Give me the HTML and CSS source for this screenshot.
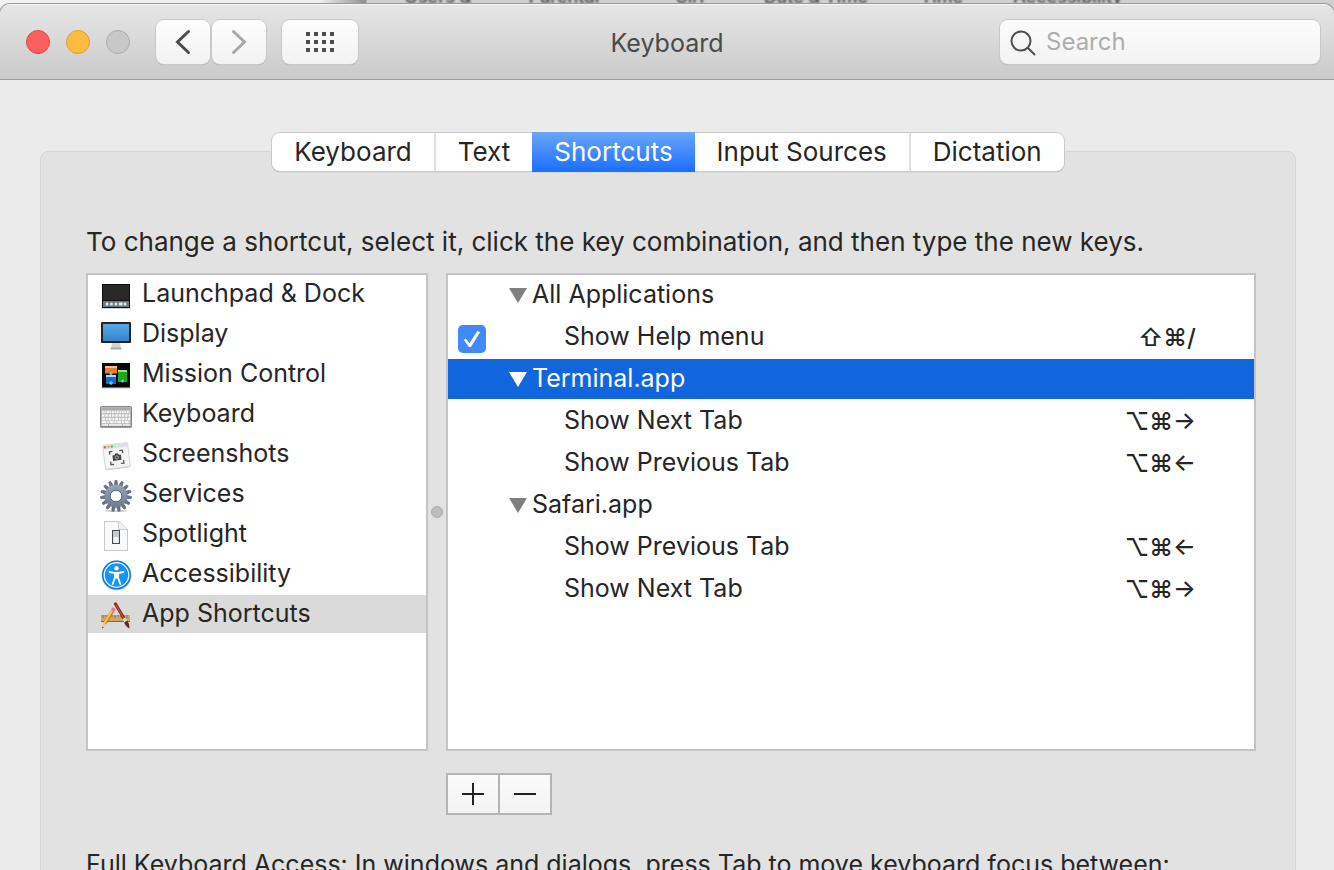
FILE: index.html
```html
<!DOCTYPE html>
<html lang="en">
<head>
<meta charset="utf-8">
<title>Keyboard</title>
<link rel="stylesheet" href="styles.css">
</head>
<body>
<div class="backdrop" aria-hidden="true">
  <div class="backdrop-labels">
    <span>Users &amp;</span><span>Parental</span><span>Siri</span><span>Date &amp; Time</span><span>Time</span><span>Accessibility</span>
  </div>
</div>
<div class="window">
  <header class="toolbar">
    <div class="toolbar-left">
      <div class="lights">
        <button class="light light-close" aria-label="Close"></button>
        <button class="light light-min" aria-label="Minimize"></button>
        <button class="light light-off" aria-label="Zoom" disabled></button>
      </div>
      <div class="nav">
        <button class="tool" aria-label="Back"><svg width="54" height="44" viewBox="0 0 54 44"><path d="M32.500 11.500 21.500 22l11 10.500" fill="none" stroke="#4d4d4d" stroke-width="3" stroke-linecap="round"/></svg></button>
        <button class="tool" aria-label="Forward"><svg width="54" height="44" viewBox="0 0 54 44"><path d="M21.500 11.500l11 10.500-11 10.500" fill="none" stroke="#a8a8a8" stroke-width="3" stroke-linecap="round"/></svg></button>
      </div>
      <button class="tool tool-wide" aria-label="Show all"><svg width="28" height="20" viewBox="0 0 28 20" fill="#4d4d4d"><path d="M0 0h4v4H0zM8 0h4v4H8zM16 0h4v4h-4zM24 0h4v4h-4zM0 8h4v4H0zM8 8h4v4H8zM16 8h4v4h-4zM24 8h4v4h-4zM0 16h4v4H0zM8 16h4v4H8zM16 16h4v4h-4zM24 16h4v4h-4z"/></svg></button>
    </div>
    <h1 class="title">Keyboard</h1>
    <label class="search">
      <svg width="26" height="28" viewBox="0 0 26 28" fill="none" stroke="#4d4d4d" stroke-width="2"><circle cx="11" cy="13" r="9.500"/><path d="M17.500 19.500l7.500 7.500"/></svg>
      <input type="text" placeholder="Search" aria-label="Search">
    </label>
  </header>
  <main class="content">
    <div class="tabs" role="tablist">
      <button class="tab" role="tab">Keyboard</button>
      <button class="tab" role="tab">Text</button>
      <button class="tab tab-active" role="tab" aria-selected="true">Shortcuts</button>
      <button class="tab" role="tab">Input Sources</button>
      <button class="tab" role="tab">Dictation</button>
    </div>
    <section class="panel">
      <p class="hint">To change a shortcut, select it, click the key combination, and then type the new keys.</p>
      <div class="split">
        <ul class="categories">
          <li><svg class="icon" viewBox="0 0 32 32"><rect x="1" y="27" width="30" height="2" rx="1" fill="#ccd4d8"/><rect x="2" y="4" width="28" height="24" fill="#101010"/><rect x="3" y="5" width="26" height="15" fill="#292929"/><rect x="3" y="21" width="26" height="6" fill="#73787b"/><g fill="#d5effb"><circle cx="7" cy="24" r="1.500"/><circle cx="11.500" cy="24" r="1.500"/><circle cx="16" cy="24" r="1.500"/><rect x="19" y="22.500" width="3.500" height="3"/><circle cx="25" cy="24" r="1.500"/></g></svg>Launchpad &amp; Dock</li>
          <li><svg class="icon" viewBox="0 0 32 32"><defs><linearGradient id="scr" x2="0" y2="1"><stop stop-color="#58a9e8"/><stop offset="1" stop-color="#3385c9"/></linearGradient></defs><path d="M12 23h8l1 5H11z" fill="#d2d2d2"/><path d="M11 27.500h10l1 2H10z" fill="#aaa"/><rect x="1" y="2" width="30" height="21" rx="1" fill="#222"/><rect x="3" y="4" width="26" height="17" fill="url(#scr)"/></svg>Display</li>
          <li><svg class="icon" viewBox="0 0 32 32"><rect x="1.500" y="27" width="29" height="2" fill="#ddd"/><rect x="2" y="3" width="28" height="24.500" fill="#080808"/><rect x="5" y="6" width="12" height="7.500" fill="#ee7c22"/><path d="M5 6h12v2H5z" fill="#f8bd8a"/><rect x="6" y="16" width="10" height="8" fill="#1a67d4"/><path d="M6 15h10v2H6z" fill="#b6d5f5"/><rect x="18" y="11" width="9" height="11" fill="#1ea51c"/><path d="M18 10h9v2h-9z" fill="#91e47f"/><g fill="#5ac8f5"><circle cx="11" cy="13.500" r="1.500"/><circle cx="11" cy="23" r="1.800"/><circle cx="22.500" cy="21" r="1.500"/></g></svg>Mission Control</li>
          <li><svg class="icon" viewBox="0 0 32 32"><rect y="26" width="32" height="2" rx="1" fill="#999"/><rect x=".5" y="6.500" width="31" height="20" rx="1" fill="#b6b6b6" stroke="#858585"/><path d="M2 9h28" stroke="#a1a1a1"/><g stroke="#f6f6f6" stroke-width="2.300"><path d="M2 12h28" stroke-dasharray="1.800 .7"/><path d="M2 15.500h28" stroke-dasharray="2.500 .8"/><path d="M2 19h28" stroke-dasharray="3 .8 2 .7"/><path d="M2 22h28" stroke-dasharray="4 .8 2 .8"/><path d="M2 25h6M9 25h13M23 25h7" stroke-width="1.500"/></g></svg>Keyboard</li>
          <li><svg class="icon" viewBox="0 0 32 32"><g transform="rotate(-7 16 16)"><rect x="4" y="5" width="25" height="24" rx="1" fill="#d0d0d0"/><rect x="4" y="4" width="25" height="24" rx="1" fill="#f5f5f5" stroke="#ccc" stroke-width=".7"/><path d="M4 4h25v4H4z" fill="#dedede"/><circle cx="6" cy="6" r="1.200" fill="#fc5753"/><circle cx="9.500" cy="6" r="1.200" fill="#e9b05c"/><circle cx="13" cy="6" r="1.200" fill="#43c85b"/><path d="M10 14v-3h3M20 11h3v3M23 21v3h-3M13 24h-3v-3" fill="none" stroke="#555" stroke-width="1.300"/><path d="M12.500 15h2l1-1.500h2.500l1 1.500h2v5.500h-8.500z" fill="#444"/><circle cx="16.700" cy="17.500" r="1.700" fill="#555" stroke="#bbb" stroke-width=".7"/></g></svg>Screenshots</li>
          <li><svg class="icon" viewBox="0 0 32 32"><defs><linearGradient id="gear" gradientUnits="userSpaceOnUse" x1="0" y1="0" x2="0" y2="32"><stop stop-color="#a1acbe"/><stop offset="1" stop-color="#65728a"/></linearGradient><path id="tooth" d="M14.300 5.500L15 .5h2L17.700 5.500z" fill="#66738a" stroke="#4c586c" stroke-width=".6"/></defs><ellipse cx="16" cy="31" rx="11" ry="1" fill="#ccc"/><use href="#tooth"/><use href="#tooth" transform="rotate(24 16 16)"/><use href="#tooth" transform="rotate(48 16 16)"/><use href="#tooth" transform="rotate(72 16 16)"/><use href="#tooth" transform="rotate(96 16 16)"/><use href="#tooth" transform="rotate(120 16 16)"/><use href="#tooth" transform="rotate(144 16 16)"/><use href="#tooth" transform="rotate(168 16 16)"/><use href="#tooth" transform="rotate(192 16 16)"/><use href="#tooth" transform="rotate(216 16 16)"/><use href="#tooth" transform="rotate(240 16 16)"/><use href="#tooth" transform="rotate(264 16 16)"/><use href="#tooth" transform="rotate(288 16 16)"/><use href="#tooth" transform="rotate(312 16 16)"/><use href="#tooth" transform="rotate(336 16 16)"/><circle cx="16" cy="16" r="8.500" fill="none" stroke="url(#gear)" stroke-width="5.500"/><circle cx="16" cy="16" r="5.800" fill="#fff" stroke="#58647a"/></svg>Services</li>
          <li><svg class="icon" viewBox="0 0 32 32"><path d="M4.500 1.500H19l8.500 8v21h-23z" fill="#fafafa" stroke="#c8c8c8"/><path d="M18.500 1.500v8h9" fill="#f2f2f2" stroke="#c8c8c8"/><rect x="12.500" y="10.500" width="7" height="13" fill="#c7cbd0" stroke="#454c56"/><rect x="13.500" y="17" width="5" height="6" fill="#f4f4f4"/></svg>Spotlight</li>
          <li><svg class="icon" viewBox="0 0 32 32"><circle cx="16.500" cy="15.500" r="15" fill="#bcc8d0"/><circle cx="16.500" cy="15" r="14.500" fill="#0a7ce4"/><circle cx="16.500" cy="15" r="12.300" fill="#1594f3" stroke="#fff" stroke-width="1.200"/><circle cx="16.500" cy="8.200" r="2.200" fill="#fff"/><path d="M9.500 12l5.500 1v4.500L12.700 24M23.500 12l-5.500 1v4.500l2.300 6.500" fill="none" stroke="#fff" stroke-width="1.800" stroke-linecap="round"/><path d="M14 12h5l-.5 6.500h-4z" fill="#fff"/></svg>Accessibility</li>
          <li class="selected"><svg class="icon" viewBox="0 0 32 32"><path d="M1 15h29v6H1z" fill="#cfa672"/><path d="M1 21h29v1H1z" fill="#8c6239"/><path d="M3 15v3m3-3v2m3-2v3m3-3v2m3-2v3m3-3v2m3-2v3m3-3v2m3-2v3" stroke="#7b5a38" stroke-width=".7"/><path d="M15.500 4L24 18.500" stroke="#8f2a1c" stroke-width="3.200" stroke-linecap="round"/><path d="M16 5L23.500 18" stroke="#cc5a3c" stroke-width="1"/><path d="M23.800 18.200l2 3.400" stroke="#dcdcdc" stroke-width="3.200"/><path d="M24.200 22.400l3-1.800q2.500 3 2.300 7.900-4-2-5.300-6.100z" fill="#5a2f22"/><path d="M4.700 23.500L12.800 10.500" stroke="#c87d13" stroke-width="3.400"/><path d="M4.300 23.200L12.400 10.200" stroke="#fbc548" stroke-width="2"/><path d="M12.600 10.800l1.500-2.600" stroke="#eb719c" stroke-width="3.600"/><path d="M3.100 22.600l3.200 1.900L2 28.500z" fill="#eccb99"/><path d="M2.300 26.600l1.300.8L2 28.700z" fill="#333"/></svg>App Shortcuts</li>
        </ul>
        <div class="splitter"></div>
        <div class="shortcuts">
          <table>
            <tbody>
              <tr class="group"><td class="c-check"></td><td><i class="tri"></i>All Applications</td><td class="keys"></td></tr>
              <tr><td class="c-check"><input type="checkbox" id="help" checked></td><td><label for="help">Show Help menu</label></td><td class="keys">⇧⌘/</td></tr>
              <tr class="group selected-row"><td class="c-check"></td><td><i class="tri"></i>Terminal.app</td><td class="keys"></td></tr>
              <tr><td class="c-check"></td><td>Show Next Tab</td><td class="keys">⌥⌘→</td></tr>
              <tr><td class="c-check"></td><td>Show Previous Tab</td><td class="keys">⌥⌘←</td></tr>
              <tr class="group"><td class="c-check"></td><td><i class="tri"></i>Safari.app</td><td class="keys"></td></tr>
              <tr><td class="c-check"></td><td>Show Previous Tab</td><td class="keys">⌥⌘←</td></tr>
              <tr><td class="c-check"></td><td>Show Next Tab</td><td class="keys">⌥⌘→</td></tr>
            </tbody>
          </table>
        </div>
      </div>
      <div class="edit">
        <button aria-label="Add"><svg width="22" height="22" viewBox="0 0 22 22"><path d="M0 11h22M11 0v22" stroke="#222" stroke-width="2"/></svg></button>
        <button aria-label="Remove"><svg width="22" height="22" viewBox="0 0 22 22"><path d="M0 11h22" stroke="#222" stroke-width="2"/></svg></button>
      </div>
      <p class="access">Full Keyboard Access: In windows and dialogs, press Tab to move keyboard focus between:</p>
    </section>
  </main>
</div>
</body>
</html>
```
FILE: styles.css
```css
* { box-sizing: border-box; }
html { height: 100%; overflow: hidden; }
body {
  margin: 0;
  height: 100%;
  overflow: hidden;
  display: flex;
  flex-direction: column;
  background: #d0d0d0;
  color: #262626;
  font: 25px/32px Inter, "Liberation Sans", sans-serif;
}
button, input { font: inherit; color: inherit; margin: 0; padding: 0; }
button { border: 0; }
h1, p, ul { margin: 0; padding: 0; }
svg { display: block; }

.backdrop {
  flex: none;
  height: 12px;
  margin-bottom: -8px;
  overflow: hidden;
  background: linear-gradient(90deg, #f2f2f2, #eee 320px, #909090 366px, #d0d0d0 367px);
}
.backdrop-labels {
  display: grid;
  grid-template-columns: repeat(6, 126px);
  grid-template-rows: 8px;
  padding-left: 375px;
  align-items: end;
  text-align: center;
  font-size: 18px;
  font-weight: 500;
  line-height: 22px;
  color: #444;
  filter: blur(1px);
}

.window {
  flex: 1 0 auto;
  position: relative;
  border-radius: 10px 10px 0 0;
  overflow: hidden;
  background: #ebebeb;
  box-shadow: 0 0 0 1px #999;
}
.toolbar {
  display: grid;
  grid-template-columns: 1fr auto 1fr;
  align-items: center;
  height: 76px;
  padding: 0 14px;
  background: linear-gradient(#e6e6e6, #cacaca);
  border-top: 1px solid #f6f6f6;
  border-bottom: 1px solid #a0a0a0;
}
.toolbar-left { display: flex; align-items: center; }
.lights { display: flex; gap: 16px; margin: 0 26px 0 12px; }
.light { width: 24px; height: 24px; border-radius: 50%; border: 1px solid; }
.light-close { background: #fc605c; border-color: #df4744; }
.light-min { background: #fdbc40; border-color: #de9f34; }
.light-off { background: #c8c8c8; border-color: #acacac; }
.nav { display: flex; gap: 2px; margin-right: 16px; }
.tool {
  display: flex;
  align-items: center;
  justify-content: center;
  width: 54px;
  height: 44px;
  border-radius: 8px;
  background: linear-gradient(#fdfdfd, #f2f2f2);
  box-shadow: 0 0 0 1px #c8c8c8, 0 1px 1px #999;
}
.tool-wide { width: 76px; }
.title { padding-top: 2px; font-size: 25px; font-weight: 400; color: #4a4a4a; }
.search {
  justify-self: end;
  display: flex;
  align-items: center;
  gap: 10px;
  width: 320px;
  height: 44px;
  padding: 0 10px;
  border-radius: 8px;
  background: linear-gradient(#fcfcfc, #f3f3f3);
  box-shadow: 0 0 0 1px #c8c8c8, 0 1px 1px #999;
}
.search svg { flex: none; }
.search input { flex: 1; min-width: 0; border: 0; background: none; outline: 0; font-size: 24px; }
.search input::placeholder { color: #adadad; opacity: 1; }

.content { display: flex; flex-direction: column; padding: 53px 38px 0 40px; }
.tabs {
  position: relative;
  align-self: center;
  display: flex;
  height: 38px;
  border-radius: 8px;
  background: #fff;
  font-size: 26px;
  box-shadow: 0 0 0 1px #cacaca, 0 1px 1px #999;
}
.tab { padding: 0 22px; background: none; line-height: 38px; }
.tab + .tab { border-left: 2px solid #e0e0e0; }
.tab.tab-active {
  border: 0;
  margin: -1px 0;
  background: linear-gradient(#6aa5f9, #1a6fff);
  color: #fff;
}
.tab.tab-active + .tab { border-left: 0; }

.panel {
  margin-top: -20px;
  padding: 74px 39px 40px 45px;
  background: #e2e2e2;
  border: 1px solid #d5d5d5;
  border-radius: 8px 8px 0 0;
}
.hint { white-space: nowrap; margin-bottom: 15px; font-size: 26px; }
.split { display: grid; grid-template-columns: 342px 18px 1fr; height: 478px; }
.categories, .shortcuts { background: #fff; border: 2px solid #c4c4c4; }
.categories { list-style: none; display: flex; flex-direction: column; gap: 2px; }
.categories li { display: flex; align-items: center; gap: 10px; height: 38px; padding: 0 12px 2px; }
.categories .selected { background: #dadada; }
.icon { width: 32px; height: 32px; flex: none; margin-top: 6px; }
.splitter {
  place-self: center;
  width: 12px;
  height: 12px;
  border-radius: 50%;
  background: #bdbdbd;
  border: 1px solid #aaa;
}
table { width: 100%; border-spacing: 0; }
td {
  height: 42px;
  padding: 0 0 2px;
  border-bottom: 2px solid #fff;
  line-height: 34px;
  white-space: nowrap;
}
td.c-check { width: 38px; padding: 4px 0 0 10px; }
td.c-check + td { padding-left: 78px; }
.group td.c-check + td { padding-left: 23px; }
td.keys { padding: 2px 58px 0 0; text-align: right; font-size: 24px; font-weight: 500; }
.selected-row { background: #1166dd; color: #fff; }
.tri {
  display: inline-block;
  width: 18px;
  height: 15px;
  margin-right: 5px;
  background: #7f7f7f;
  clip-path: polygon(0 0, 100% 0, 50% 100%);
}
.selected-row .tri { background: #fff; }
input[type="checkbox"] {
  appearance: none;
  display: block;
  width: 28px;
  height: 28px;
  border-radius: 5px;
  background: #4189f8;
}
input[type="checkbox"]::after {
  content: "";
  display: block;
  width: 28px;
  height: 28px;
  background: #fff;
  clip-path: polygon(21% 54%, 28% 48%, 41% 65%, 69% 21%, 79% 26%, 46% 79%, 39% 79%);
}
.edit { display: flex; width: 106px; height: 42px; margin: 22px 0 33px 360px; border: 2px solid #b4b4b4; }
.edit button {
  flex: 1;
  display: flex;
  align-items: center;
  justify-content: center;
  background: linear-gradient(#fbfbfb, #f3f3f3);
}
.edit button + button { border-left: 2px solid #b4b4b4; }
.access { white-space: nowrap; }
```
